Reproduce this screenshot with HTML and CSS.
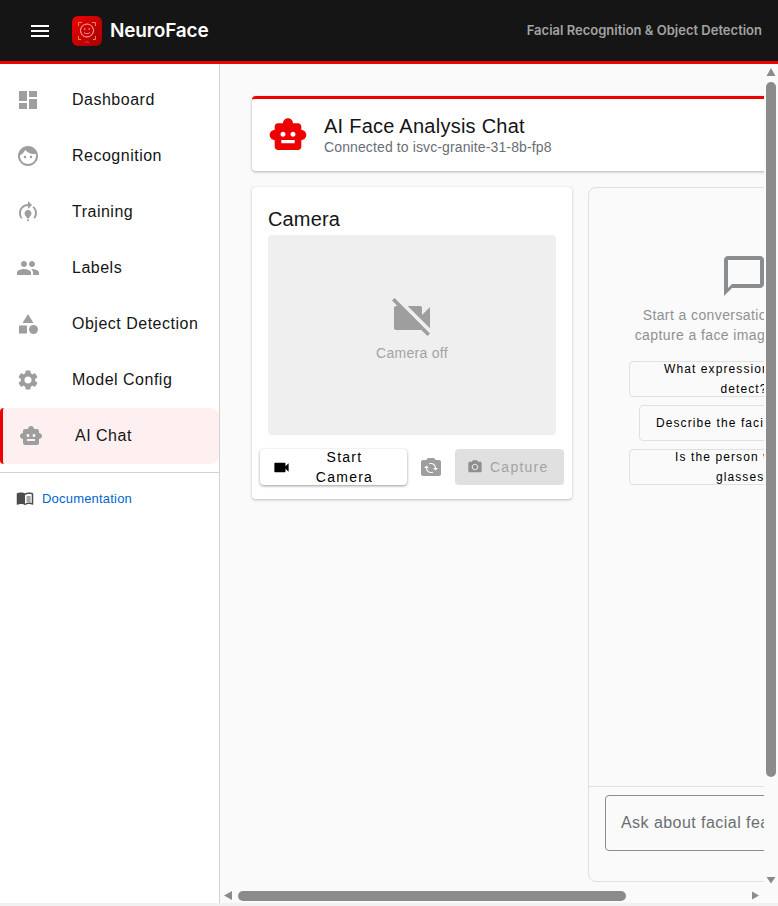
FILE: index.html
```html
<!DOCTYPE html>
<html lang="en">
<head>
<meta charset="utf-8">
<title>NeuroFace</title>
<link rel="stylesheet" href="styles.css">
</head>
<body>
<div class="app">
  <header class="topbar">
    <svg class="burger" viewBox="0 0 24 24"><path d="M3 18h18v-2H3v2zm0-5h18v-2H3v2zm0-7v2h18V6H3z"/></svg>
    <div class="logo">
      <svg viewBox="0 0 30 30" class="logo-art">
        <g fill="none" stroke="#f0883c" stroke-width="1">
          <path d="M6.5 10V6.5H10M20 6.5h3.500V10M6.500 20v3.500H9M21 23.500h2.500V20"/>
        </g>
        <circle cx="15" cy="14.500" r="6.500" fill="none" stroke="#f6b5b5" stroke-width="1"/>
        <circle cx="12.800" cy="13" r=".8" fill="#f6b5b5"/>
        <circle cx="17.200" cy="13" r=".8" fill="#f6b5b5"/>
        <path d="M12 16.500c1.500 1.600 4.500 1.600 6 0" fill="none" stroke="#f6b5b5" stroke-width=".8"/>
        <path d="M13 27l2-1.500 2 1.500" fill="none" stroke="#e77" stroke-width=".6"/>
      </svg>
    </div>
    <span class="brand">NeuroFace</span>
    <span class="tagline">Facial Recognition &amp; Object Detection</span>
  </header>
  <div class="body-row">
    <nav class="sidebar">
      <ul class="nav-list">
        <li class="nav-item">
          <svg class="nav-icon" viewBox="0 0 24 24"><path d="M3 13h8V3H3v10zm0 8h8v-6H3v6zm10 0h8V11h-8v10zm0-18v6h8V3h-8z"/></svg>
          <span>Dashboard</span>
        </li>
        <li class="nav-item">
          <svg class="nav-icon" viewBox="0 0 24 24"><path d="M9 11.750c-.69 0-1.250.56-1.250 1.250s.56 1.250 1.250 1.250 1.250-.56 1.250-1.250-.56-1.250-1.250-1.250zm6 0c-.69 0-1.250.56-1.250 1.250s.56 1.250 1.250 1.250 1.250-.56 1.250-1.250-.56-1.250-1.250-1.250zM12 2C6.480 2 2 6.480 2 12s4.480 10 10 10 10-4.480 10-10S17.520 2 12 2zm0 18c-4.410 0-8-3.590-8-8 0-.29.020-.58.050-.86 2.360-1.050 4.230-2.980 5.210-5.370C11.070 8.330 14.050 10 17.420 10c.78 0 1.530-.09 2.250-.26.21.71.33 1.470.33 2.260 0 4.410-3.590 8-8 8z"/></svg>
          <span>Recognition</span>
        </li>
        <li class="nav-item">
          <svg class="nav-icon" viewBox="0 0 24 24"><path d="M15.500 13.500c0 2-2.500 3.500-2.500 5h-2c0-1.500-2.500-3-2.500-5 0-1.930 1.570-3.500 3.500-3.500s3.500 1.570 3.500 3.500zm-2.500 6h-2V21h2v-1.500zm6-6.500c0 1.680-.59 3.210-1.580 4.420l1.420 1.420C20.180 17.260 21 15.230 21 13c0-2.740-1.230-5.190-3.160-6.840l-1.420 1.420C17.990 8.860 19 10.810 19 13zM16 5l-4-4v3c-4.970 0-9 4.030-9 9 0 2.230.82 4.260 2.160 5.840l1.420-1.420C5.590 17.210 5 15.180 5 13c0-3.860 3.140-7 7-7v3l4-4z"/></svg>
          <span>Training</span>
        </li>
        <li class="nav-item">
          <svg class="nav-icon" viewBox="0 0 24 24"><path d="M16 11c1.660 0 2.990-1.340 2.990-3S17.660 5 16 5c-1.660 0-3 1.340-3 3s1.340 3 3 3zm-8 0c1.660 0 2.990-1.340 2.990-3S9.660 5 8 5C6.340 5 5 6.340 5 8s1.340 3 3 3zm0 2c-2.330 0-7 1.170-7 3.500V19h14v-2.500c0-2.330-4.670-3.500-7-3.500zm8 0c-.29 0-.62.020-.97.050 1.160.84 1.970 1.970 1.970 3.450V19h6v-2.500c0-2.330-4.670-3.500-7-3.500z"/></svg>
          <span>Labels</span>
        </li>
        <li class="nav-item">
          <svg class="nav-icon" viewBox="0 0 24 24"><path d="M12 2l-5.500 9h11z"/><circle cx="17.500" cy="17.500" r="4.500"/><path d="M3 13.500h8v8H3z"/></svg>
          <span>Object Detection</span>
        </li>
        <li class="nav-item">
          <svg class="nav-icon" viewBox="0 0 24 24"><path d="M19.140 12.940c.04-.3.060-.61.060-.94 0-.32-.02-.64-.07-.94l2.030-1.580c.18-.14.23-.41.12-.61l-1.920-3.320c-.12-.22-.37-.29-.59-.22l-2.390.96c-.5-.38-1.030-.7-1.620-.94l-.36-2.540c-.04-.24-.24-.41-.48-.41h-3.840c-.24 0-.43.17-.47.41l-.36 2.540c-.59.24-1.130.57-1.620.94l-2.390-.96c-.22-.08-.47 0-.59.22L2.740 8.870c-.12.21-.08.47.12.61l2.030 1.580c-.05.3-.09.63-.09.94s.02.64.07.94l-2.030 1.580c-.18.14-.23.41-.12.61l1.920 3.320c.12.22.37.29.59.22l2.390-.96c.5.38 1.030.7 1.620.94l.36 2.540c.05.24.24.41.48.41h3.840c.24 0 .44-.17.47-.41l.36-2.540c.59-.24 1.130-.56 1.620-.94l2.390.96c.22.08.47 0 .59-.22l1.920-3.320c.12-.22.07-.47-.12-.61l-2.010-1.580zM12 15.600c-1.980 0-3.600-1.620-3.600-3.600s1.620-3.600 3.600-3.600 3.600 1.620 3.600 3.600-1.620 3.600-3.600 3.600z"/></svg>
          <span>Model Config</span>
        </li>
        <li class="nav-item active">
          <svg class="nav-icon" viewBox="0 0 24 24"><path d="M20 9V7c0-1.100-.9-2-2-2h-3c0-1.660-1.340-3-3-3S9 3.340 9 5H6c-1.100 0-2 .9-2 2v2c-1.660 0-3 1.340-3 3s1.340 3 3 3v4c0 1.100.9 2 2 2h12c1.100 0 2-.9 2-2v-4c1.660 0 3-1.340 3-3s-1.340-3-3-3zM7.500 11.500c0-.83.67-1.500 1.500-1.500s1.500.67 1.500 1.500S9.830 13 9 13s-1.500-.67-1.500-1.500zM16 17H8v-2h8v2zm-1-4c-.83 0-1.500-.67-1.500-1.500S14.170 10 15 10s1.500.67 1.500 1.500S15.830 13 15 13z"/></svg>
          <span>AI Chat</span>
        </li>
      </ul>
      <div class="side-divider"></div>
      <a class="doc-link">
        <svg class="doc-icon" viewBox="0 0 24 24"><path d="M21 5c-1.110-.35-2.330-.5-3.500-.5-1.950 0-4.050.4-5.500 1.500-1.450-1.100-3.550-1.500-5.500-1.500S2.450 4.900 1 6v14.650c0 .25.25.5.5.5.1 0 .15-.05.25-.05C3.100 20.450 5.050 20 6.500 20c1.950 0 4.050.4 5.500 1.500 1.350-.85 3.800-1.500 5.500-1.500 1.650 0 3.350.3 4.750 1.050.1.05.15.05.25.05.25 0 .5-.25.5-.5V6c-.6-.45-1.250-.75-2-1zm0 13.500c-1.100-.35-2.300-.5-3.500-.5-1.700 0-4.150.65-5.500 1.500V8c1.350-.85 3.800-1.500 5.500-1.500 1.200 0 2.400.15 3.500.5v11.500z"/><path d="M14 10h5.500v1.200H14zM14 12.700h5.500v1.200H14zM14 15.300h5.500v1.200H14z"/></svg>
        <span>Documentation</span>
      </a>
    </nav>
    <main class="scroller">
      <div class="page">
        <section class="title-card">
          <svg class="title-icon" viewBox="0 0 24 24"><path d="M20 9V7c0-1.100-.9-2-2-2h-3c0-1.660-1.340-3-3-3S9 3.340 9 5H6c-1.100 0-2 .9-2 2v2c-1.660 0-3 1.340-3 3s1.340 3 3 3v4c0 1.100.9 2 2 2h12c1.100 0 2-.9 2-2v-4c1.660 0 3-1.340 3-3s-1.340-3-3-3zM7.500 11.500c0-.83.67-1.500 1.500-1.500s1.500.67 1.500 1.500S9.830 13 9 13s-1.500-.67-1.500-1.500zM16 17H8v-2h8v2zm-1-4c-.83 0-1.500-.67-1.500-1.500S14.170 10 15 10s1.500.67 1.500 1.500S15.830 13 15 13z"/></svg>
          <div class="title-text">
            <h1 class="title-main">AI Face Analysis Chat</h1>
            <p class="title-sub">Connected to isvc-granite-31-8b-fp8</p>
          </div>
        </section>
        <div class="columns">
          <section class="camera-card">
            <h2 class="camera-title">Camera</h2>
            <div class="video-box">
              <svg class="video-off" viewBox="0 0 24 24"><path d="M21 6.500l-4 4V7c0-.55-.45-1-1-1H9.820L21 17.180V6.500zM3.270 2L2 3.270 4.730 6H4c-.55 0-1 .45-1 1v10c0 .55.45 1 1 1h12c.21 0 .39-.08.54-.18L19.730 21 21 19.730 3.270 2z"/></svg>
              <span class="video-label">Camera off</span>
            </div>
            <div class="camera-actions">
              <button class="btn-start">
                <svg class="btn-icon" viewBox="0 0 24 24"><path d="M17 10.500V7c0-.55-.45-1-1-1H4c-.55 0-1 .45-1 1v10c0 .55.45 1 1 1h12c.55 0 1-.45 1-1v-3.500l4 4v-11l-4 4z"/></svg>
                <span class="btn-start-label">Start Camera</span>
              </button>
              <svg class="flip-icon" viewBox="0 0 24 24"><path d="M20 5h-3.170L15 3H9L7.170 5H4c-1.100 0-2 .9-2 2v12c0 1.100.9 2 2 2h16c1.100 0 2-.9 2-2V7c0-1.100-.9-2-2-2zm-8 13c-2.760 0-5-2.240-5-5H5l2.500-2.500L10 13H8c0 2.210 1.790 4 4 4 .58 0 1.130-.13 1.620-.35l.74.74c-.71.37-1.500.61-2.360.61zm4.500-2.500L14 13h2c0-2.210-1.790-4-4-4-.58 0-1.130.13-1.620.35l-.74-.74C10.350 8.240 11.140 8 12 8c2.760 0 5 2.240 5 5h2l-2.500 2.500z"/></svg>
              <button class="btn-capture" disabled>
                <svg class="capture-icon" viewBox="0 0 24 24"><circle cx="12" cy="12" r="3.200"/><path d="M9 2L7.170 4H4c-1.100 0-2 .9-2 2v12c0 1.100.9 2 2 2h16c1.100 0 2-.9 2-2V6c0-1.100-.9-2-2-2h-3.170L15 2H9zm3 15c-2.760 0-5-2.240-5-5s2.240-5 5-5 5 2.240 5 5-2.240 5-5 5z"/></svg>
                <span>Capture</span>
              </button>
            </div>
          </section>
          <section class="chat-card">
            <div class="chat-messages">
              <svg class="chat-icon" viewBox="0 0 24 24"><path d="M20 2H4c-1.100 0-2 .9-2 2v18l4-4h14c1.100 0 2-.9 2-2V4c0-1.100-.9-2-2-2zm0 14H6l-2 2V4h16v12z"/></svg>
              <p class="chat-hint">Start a conversation with AI, or<br>capture a face image for analysis</p>
              <div class="chip-stack">
                <button class="chip"><span>What expression can you detect?</span></button>
                <button class="chip"><span>Describe the facial features</span></button>
                <button class="chip"><span>Is the person wearing glasses?</span></button>
              </div>
            </div>
            <div class="chat-input-row">
              <input class="chat-input" type="text" placeholder="Ask about facial features...">
            </div>
          </section>
        </div>
      </div>
      <div class="vbar">
        <svg class="bar-arrow-v" viewBox="0 0 14 18"><path d="M7 4l4.500 8h-9z"/></svg>
        <div class="vthumb"></div>
      </div>
      <svg class="bar-arrow-v bar-arrow-end" viewBox="0 0 14 18"><path d="M7 12.500l4.500-6.500h-9z"/></svg>
      <div class="hbar">
        <svg class="bar-arrow-h" viewBox="0 0 18 14"><path d="M4 6.500l8-4.500v9z"/></svg>
        <div class="hthumb"></div>
        <svg class="bar-arrow-h bar-arrow-right" viewBox="0 0 18 14"><path d="M13 6.500l-7-4v8z"/></svg>
      </div>
    </main>
  </div>
</div>
</body>
</html>
```

FILE: styles.css
```css
* { box-sizing: border-box; }
html, body { margin: 0; padding: 0; height: 100%; overflow: hidden; }
body { background: #f0f0f0; font-family: "Liberation Sans", Arial, sans-serif; color: #151515; }
.app { height: 903px; display: flex; flex-direction: column; background: #fafafa; }

.topbar { height: 64px; flex: none; display: flex; align-items: center; background: #151515; border-bottom: 3px solid #ee0000; padding: 0 16px 0 28px; }
.burger { width: 24px; height: 24px; fill: #fff; flex: none; }
.logo { width: 30px; height: 30px; margin-left: 20px; border-radius: 6px; background: linear-gradient(135deg, #ee0000, #a30000); flex: none; }
.logo-art { display: block; width: 30px; height: 30px; }
.brand { margin-left: 8px; font-family: Inter, sans-serif; font-weight: 600; font-size: 19px; letter-spacing: -0.17px; color: #fff; }
.tagline { margin-left: auto; margin-bottom: 2px; font-family: Inter, sans-serif; font-weight: 600; font-size: 13px; color: #a3a3a3; }

.body-row { flex: 1; min-height: 0; display: flex; }
.sidebar { width: 220px; flex: none; background: #fff; border-right: 1px solid #d2d2d2; padding-top: 8px; }
.nav-list { list-style: none; margin: 0; padding: 0; }
.nav-item { height: 56px; display: flex; align-items: center; padding-left: 16px; font-size: 16px; letter-spacing: 0.5px; color: #151515; }
.nav-icon { width: 24px; height: 24px; fill: #9e9e9e; margin-right: 32px; flex: none; }
.nav-item.active { background: #fef0f0; border-left: 3px solid #ee0000; border-radius: 4px 8px 8px 4px; }
.side-divider { height: 1px; background: #d2d2d2; margin-top: 8px; }
.doc-link { display: flex; align-items: center; padding: 16px 0 0 16px; font-size: 13px; letter-spacing: 0.2px; color: #0066cc; }
.doc-icon { width: 18px; height: 18px; fill: #4d4d4d; margin-right: 8px; flex: none; }

.scroller { position: relative; flex: 1; min-width: 0; overflow: hidden; background: #fafafa; }
.vbar { position: absolute; top: 0; right: 0; bottom: 14px; width: 14px; display: flex; flex-direction: column; background: #fafafa; }
.vthumb { width: 10px; height: 695px; margin-left: 2px; border-radius: 5px; background: #8b8b8b; }
.hbar { position: absolute; left: 0; right: 0; bottom: 0; height: 14px; display: flex; align-items: center; padding-right: 14px; background: #fafafa; }
.hthumb { width: 388px; height: 10px; border-radius: 5px; background: #8b8b8b; }
.bar-arrow-v { display: block; flex: none; width: 14px; height: 18px; fill: #8b8b8b; }
.bar-arrow-h { display: block; flex: none; width: 18px; height: 14px; fill: #8b8b8b; }
.bar-arrow-end { position: absolute; right: 0; bottom: 14px; }
.bar-arrow-right { margin-left: auto; }

.page { width: 712px; height: 937px; padding: 32px; }
.title-card { height: 75px; display: flex; align-items: center; padding-left: 16px; background: #fff; border-top: 3px solid #ee0000; border-radius: 4px; box-shadow: 0 1px 3px rgba(0,0,0,.3); }
.title-icon { width: 40px; height: 40px; fill: #ee0000; margin-right: 16px; flex: none; }
.title-main { margin: -1px 0 1px; font-size: 20px; font-weight: 400; line-height: 24px; letter-spacing: 0.25px; color: #151515; }
.title-sub { margin: 0; font-size: 14px; line-height: 16px; letter-spacing: 0.12px; color: #6a6e73; }

.columns { display: flex; gap: 16px; margin-top: 16px; align-items: flex-start; }
.camera-card { width: 320px; flex: none; height: 312px; padding: 16px 8px 0; background: #fff; border-radius: 4px; box-shadow: 0 1px 3px rgba(0,0,0,.25); }
.camera-title { margin: 0 8px; font-size: 20px; font-weight: 400; line-height: 32px; letter-spacing: 0.15px; color: #151515; }
.video-box { margin: 0 8px; height: 200px; padding-bottom: 14px; border-radius: 4px; background: #efefef; display: flex; flex-direction: column; align-items: center; justify-content: center; }
.video-off { width: 48px; height: 48px; fill: #9e9e9e; }
.video-label { font-size: 14px; line-height: 20px; letter-spacing: 0.3px; color: #a3a3a3; margin-top: 1px; }
.camera-actions { display: flex; align-items: center; margin-top: 14px; }
.btn-start { width: 147px; height: 36px; display: flex; align-items: center; padding: 0 9px 0 12px; border: 0; border-radius: 4px; background: #fff; box-shadow: 0 1px 3px rgba(0,0,0,.4); font: inherit; font-size: 14px; line-height: 20px; letter-spacing: 1.25px; color: #000; }
.btn-start-label { flex: 1; padding: 0 10px; text-align: center; }
.btn-icon { width: 19px; height: 19px; fill: currentColor; flex: none; }
.flip-icon { width: 24px; height: 24px; fill: #9e9e9e; margin: 0 12px; flex: none; }
.btn-capture { width: 109px; height: 36px; display: flex; align-items: center; gap: 7px; padding: 0 0 0 12px; border: 0; border-radius: 4px; background: #e0e0e0; font: inherit; font-size: 14px; letter-spacing: 1.25px; color: #a3a3a3; }
.capture-icon { width: 16px; height: 16px; fill: #8f8f8f; flex: none; }

.chat-card { width: 312px; height: 695px; flex: none; display: flex; flex-direction: column; background: #fafafa; border: 1px solid #e0e0e0; border-radius: 8px; }
.chat-messages { flex: 1; min-height: 0; display: flex; flex-direction: column; align-items: center; padding-top: 64px; border-bottom: 1px solid #e0e0e0; }
.chat-icon { width: 48px; height: 48px; fill: #8a8d90; flex: none; }
.chat-hint { margin: 5px 0 0; font-size: 14px; line-height: 20px; letter-spacing: 0.4px; text-align: center; color: #8f9194; }
.chip-stack { display: flex; flex-direction: column; align-items: center; gap: 8px; margin-top: 16px; }
.chip { max-width: 231px; height: 36px; display: flex; align-items: center; justify-content: center; padding: 0 16px; background: transparent; border: 1px solid #e0e0e0; border-radius: 4px; font: inherit; font-size: 12px; line-height: 20px; letter-spacing: 1.1px; color: #000; text-align: center; }
.chat-input-row { flex: none; height: 94px; padding: 8px 16px 0; }
.chat-input { width: 100%; height: 56px; padding: 0 15px; border: 1px solid #8a8d90; border-radius: 4px; background: #fafafa; font: inherit; font-size: 16px; letter-spacing: 0.45px; color: #151515; }
.chat-input::placeholder { color: #6a6e73; opacity: 1; }
```
